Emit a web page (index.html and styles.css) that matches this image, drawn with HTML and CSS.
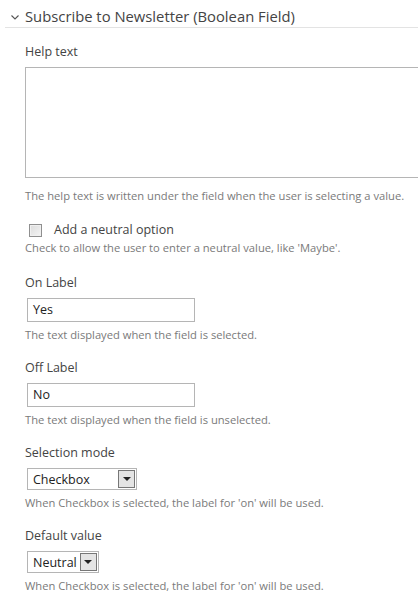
FILE: index.html
```html
<!DOCTYPE html>
<html lang="en">
<head>
    <meta charset="UTF-8">
    <title>Boolean Field</title>
    <link rel="stylesheet" href="styles.css">
</head>
<body>

    <div class="section-header">
        <svg class="chevron" width="8" height="5" viewBox="0 0 8 5"><path d="M0.5 0.5 L4 4 L7.5 0.5" fill="none" stroke="#555" stroke-width="1.1"/></svg>
        <span class="section-title">Subscribe to Newsletter (Boolean Field)</span>
    </div>

    <div class="form">
        <!-- Help text -->
        <div class="field field-help">
            <label class="field-label">Help text</label>
            <textarea class="help-area"></textarea>
            <div class="hint">The help text is written under the field when the user is selecting a value.</div>
        </div>

        <!-- Neutral option -->
        <div class="field field-check">
            <label class="check-label"><span class="fake-check"></span> Add a neutral option</label>
            <div class="hint">Check to allow the user to enter a neutral value, like 'Maybe'.</div>
        </div>

        <div class="field field-after-check">
            <label class="field-label">On Label</label>
            <div class="text-input">Yes</div>
            <div class="hint">The text displayed when the field is selected.</div>
        </div>

        <div class="field">
            <label class="field-label">Off Label</label>
            <div class="text-input">No</div>
            <div class="hint">The text displayed when the field is unselected.</div>
        </div>

        <div class="field">
            <label class="field-label">Selection mode</label>
            <div class="select select-wide"><span class="select-value">Checkbox</span><span class="select-btn"></span></div>
            <div class="hint">When Checkbox is selected, the label for 'on' will be used.</div>
        </div>

        <div class="field">
            <label class="field-label">Default value</label>
            <div class="select"><span class="select-value">Neutral</span><span class="select-btn"></span></div>
            <div class="hint">When Checkbox is selected, the label for 'on' will be used.</div>
        </div>
    </div>

</body>
</html>
```

FILE: styles.css
```css
body {
    margin: 0;
    background: #fff;
    font-family: 'Open Sans', 'Noto Sans', sans-serif;
    color: #444;
    overflow: hidden;
}

.section-header {
    display: flex;
    align-items: center;
    margin-left: 5px;
    padding: 6px 0 1px 6px;
    border-bottom: 1px solid #e3e3e3;
}

.chevron {
    margin-right: 6px;
    margin-top: 2px;
}

.section-title {
    font-size: 14.8px;
    line-height: 20px;
    color: #444;
}

.form {
    padding-left: 25px;
}

.field {
    margin-top: 18px;
}

.field-help {
    margin-top: 16px;
}

.field-after-check {
    margin-top: 20px;
}

.field-label {
    display: block;
    font-size: 12.5px;
    color: #444;
    line-height: 16px;
    margin-bottom: 7px;
}

.help-area {
    display: block;
    box-sizing: border-box;
    width: 100%;
    height: 111px;
    margin: 0;
    border: 1px solid #b5b5b5;
    border-right: none;
    resize: none;
}

.hint {
    font-size: 11.2px;
    color: #7a7a7a;
    line-height: 14px;
    margin-top: 6px;
}

.field-help .hint {
    margin-top: 11px;
}

.check-label {
    display: flex;
    align-items: center;
    font-size: 12.5px;
    color: #444;
    line-height: 18px;
}

.fake-check {
    box-sizing: border-box;
    width: 13px;
    height: 13px;
    margin-left: 4px;
    margin-right: 12px;
    border: 1px solid #8f8f8f;
    background: linear-gradient(135deg, #dcdcdc, #f4f4f4);
    box-shadow: inset 0 0 0 1px #f0f0f0;
}

.field-check .hint {
    margin-top: 2px;
}

.text-input {
    box-sizing: border-box;
    width: 168px;
    height: 24px;
    margin-left: 2px;
    border: 1px solid #b5b5b5;
    padding-left: 5px;
    font-size: 12.5px;
    line-height: 22px;
    color: #222;
}

.select {
    display: inline-flex;
    align-items: center;
    box-sizing: border-box;
    height: 22px;
    margin-left: 2px;
    border: 1px solid #b5b5b5;
    padding-left: 5px;
    padding-right: 1px;
    font-size: 12.5px;
    color: #222;
    vertical-align: top;
}

.select-wide {
    width: 110px;
}

.select-wide .select-value {
    flex: 1;
}

.select-value {
    margin-right: 3px;
}

.select-btn {
    box-sizing: border-box;
    width: 17px;
    height: 18px;
    border: 1px solid #777;
    background: #e4e4e4;
    display: flex;
    justify-content: center;
    align-items: center;
}

.select-btn::after {
    content: "";
    border-left: 4px solid transparent;
    border-right: 4px solid transparent;
    border-top: 4px solid #222;
}
```
